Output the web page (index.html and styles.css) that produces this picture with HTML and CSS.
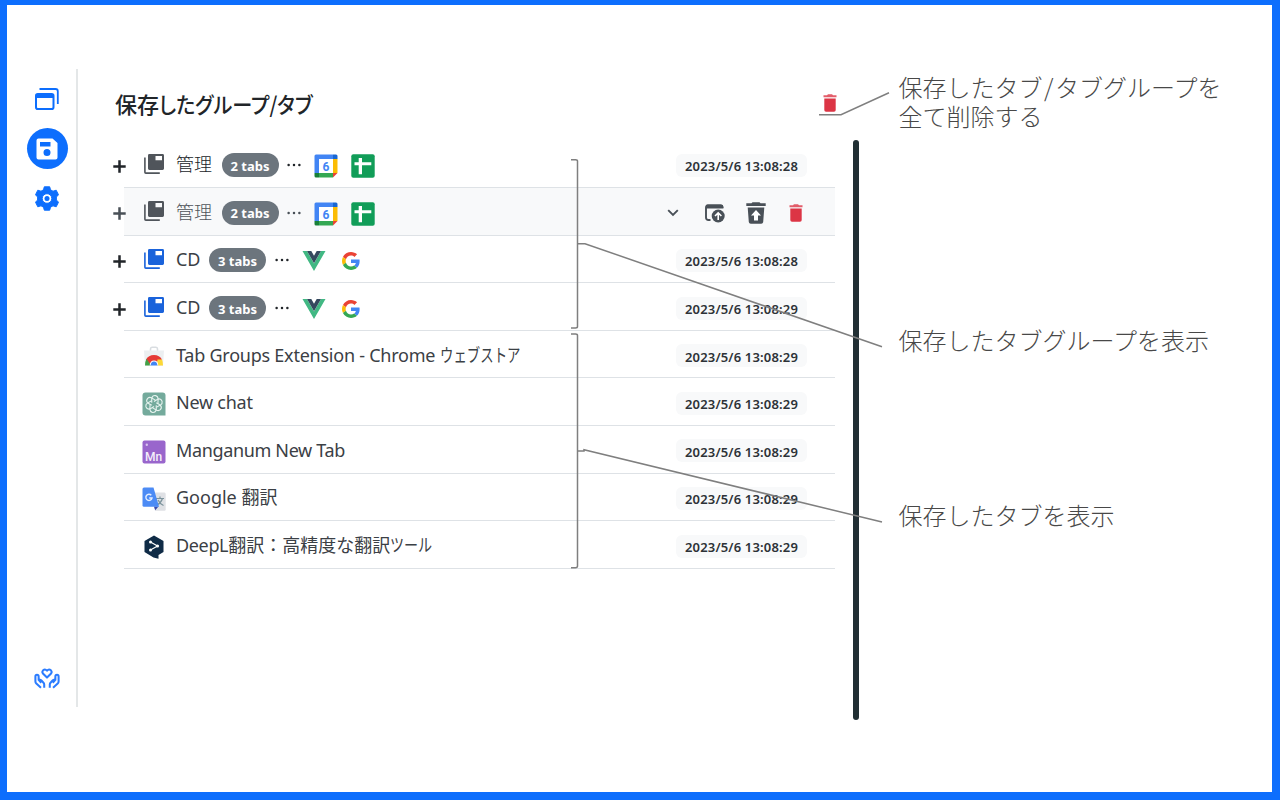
FILE: index.html
```html
<!DOCTYPE html>
<html lang="ja">
<head>
<meta charset="utf-8">
<title>保存したグループ/タブ</title>
<link rel="stylesheet" href="styles.css">
</head>
<body>
<svg class="defs" width="0" height="0">
  <symbol id="book" viewBox="0 0 20 20"><path fill="currentColor" d="M5.400 0H18.600Q20 0 20 1.400V14.600Q20 16 18.600 16H5.400Q4 16 4 14.600V1.400Q4 0 5.400 0ZM11.500 2V6.300H18V2Z" fill-rule="evenodd"/><path fill="none" stroke="currentColor" stroke-width="1.600" d="M.9 3.500V18.200Q.9 19.100 1.800 19.100H15.800"/></symbol>
  <symbol id="calendar" viewBox="0 0 24 24"><path fill="#4285f4" d="M2 .5H19V5H5V19H.5V2Q.5.5 2 .5Z"/><path fill="#1967d2" d="M19 .5H22Q23.500.5 23.500 2V5H19Z"/><path fill="#fbbc04" d="M19 5H23.500V19H19Z"/><path fill="#188038" d="M.5 19H5V23.500H2Q.5 23.500.5 22Z"/><path fill="#34a853" d="M5 19H19V23.500H5Z"/><path fill="#fff" d="M5 5H19V19H5Z"/><path fill="#ea4335" d="M19 19H23.500L19 23.500Z"/></symbol>
  <symbol id="sheets" viewBox="0 0 24 24"><rect x=".3" y=".3" width="23.400" height="23.400" rx="2" fill="#119d58"/><path fill="#fff" d="M7.700 4H11V8.200H20.300V11.300H11V20.300H7.700V11.300H3.500V8.200H7.700Z"/></symbol>
  <symbol id="vue" viewBox="0 0 24 24"><path fill="#41b883" d="M.5 2H5L12 14.500 19 2H23.500L12 22Z"/><path fill="#34495e" d="M5 2H9.300L12 6.700 14.700 2H19L12 14.200Z"/></symbol>
  <symbol id="google" viewBox="0 0 48 48"><path fill="#EA4335" d="M24 9.500c3.540 0 6.710 1.220 9.210 3.600l6.850-6.850C35.900 2.380 30.470 0 24 0 14.620 0 6.510 5.380 2.560 13.220l7.980 6.190C12.430 13.720 17.740 9.500 24 9.500z"/><path fill="#4285F4" d="M46.980 24.550c0-1.570-.15-3.090-.38-4.550H24v9.020h12.940c-.58 2.960-2.260 5.480-4.780 7.180l7.730 6c4.510-4.180 7.090-10.360 7.090-17.650z"/><path fill="#FBBC05" d="M10.530 28.590c-.48-1.450-.76-2.990-.76-4.590s.27-3.140.76-4.590l-7.980-6.190C.92 16.460 0 20.120 0 24c0 3.880.92 7.540 2.560 10.780l7.970-6.190z"/><path fill="#34A853" d="M24 48c6.480 0 11.930-2.130 15.890-5.810l-7.730-6c-2.150 1.450-4.920 2.300-8.160 2.300-6.260 0-11.570-4.220-13.470-9.910l-7.980 6.190C6.510 42.620 14.620 48 24 48z"/></symbol>
  <symbol id="trash" viewBox="0 0 14 18"><path fill="#dc3545" d="M.5 1.300H4L5 .3H9L10 1.300H13.500V3.300H.5Z" opacity=".8"/><path fill="#dc3545" d="M1.300 4.500H12.700V16Q12.700 17.700 11 17.700H3Q1.300 17.700 1.300 16Z"/></symbol>
  <symbol id="plus" viewBox="0 0 13 13"><path stroke="currentColor" stroke-width="2.500" d="M6.500 .3V12.700M.3 6.500H12.700"/></symbol>
  <symbol id="dots" viewBox="0 0 14 4"><g fill="currentColor"><circle cx="1.600" cy="2" r="1.250"/><circle cx="7" cy="2" r="1.250"/><circle cx="12.400" cy="2" r="1.250"/></g></symbol>
</svg>

<div class="frame">
  <nav class="sidebar">
    <svg class="nav-icon" width="24" height="23" viewBox="0 0 24 23"><path fill="none" stroke="#0d6efd" stroke-width="1.800" d="M4.500 1H20.500Q22.800 1 22.800 3.300V16"/><rect x="1" y="6" width="17.500" height="15" rx="1.800" fill="none" stroke="#0d6efd" stroke-width="2"/><path fill="#0d6efd" d="M1 6H18.500V10H1Z"/></svg>
    <div class="nav-active"><svg width="22" height="22" viewBox="0 0 22 22"><path fill="#fff" fill-rule="evenodd" d="M2.500.5H16.500L21.500 5V19.500Q21.500 21.500 19.500 21.500H2.500Q.5 21.500.5 19.500V2.500Q.5.5 2.500.5ZM4 4V8.500H14.500V4ZM11 11A3.500 3.500 0 1 0 11 18A3.500 3.500 0 1 0 11 11Z"/></svg></div>
    <svg class="nav-gear" width="24" height="25" viewBox="0 0 24 25"><path fill="#0d6efd" stroke="#0d6efd" stroke-linejoin="round" fill-rule="evenodd" d="M9.300.8H14.700L15.500 3.800 18 5.200 21.200 4.200 23.500 8.800 21.400 11V14L23.500 16.200 21.200 20.800 18 19.800 15.500 21.200 14.700 24.200H9.300L8.500 21.200 6 19.800 2.800 20.800.5 16.200 2.600 14V11L.5 8.800 2.800 4.200 6 5.200 8.500 3.800ZM12 7.700A4.800 4.800 0 1 0 12 17.300A4.800 4.800 0 1 0 12 7.700Z"/><circle cx="12" cy="12.500" r="2.500" fill="#0d6efd"/></svg>
    <svg class="nav-care" width="26" height="21" viewBox="0 0 28 22"><g fill="none" stroke="#2b7cff" stroke-width="2.200" stroke-linejoin="round"><path d="M14 10L9.600 5.600Q8.300 3.800 9.800 2.200 12 .3 14 2.600 16 .3 18.200 2.200 19.700 3.800 18.400 5.600Z"/><path d="M7.500 21L2.500 16.500Q1.500 15.500 1.500 14V9Q1.500 7 3.200 7 5 7 5 9V12.500L7.800 15.500M5 13Q6.500 11.800 8 13.200L10 15.300Q11 16.300 11 17.500V21"/><path d="M20.500 21L25.500 16.500Q26.500 15.500 26.500 14V9Q26.500 7 24.800 7 23 7 23 9V12.500L20.200 15.500M23 13Q21.500 11.800 20 13.200L18 15.300Q17 16.300 17 17.500V21"/></g></svg>
  </nav>

  <main class="panel">
    <header class="panel-head"><h1>保存<span class="narrow">したグループ/タブ</span></h1><svg class="trash" width="14" height="18"><use href="#trash"/></svg></header>
    <ul class="list">
      <li class="row"><svg class="plus"><use href="#plus"/></svg><svg class="book"><use href="#book"/></svg><span class="name kanji">管理</span><span class="badge">2 tabs</span><svg class="dots"><use href="#dots"/></svg><svg class="fav"><use href="#calendar"/><text x="12" y="16.500" text-anchor="middle" class="cal-day">6</text></svg><svg class="fav"><use href="#sheets"/></svg><time>2023/5/6 13:08:28</time></li>
      <li class="row hovered"><svg class="plus"><use href="#plus"/></svg><svg class="book"><use href="#book"/></svg><span class="name kanji">管理</span><span class="badge">2 tabs</span><svg class="dots"><use href="#dots"/></svg><svg class="fav"><use href="#calendar"/><text x="12" y="16.500" text-anchor="middle" class="cal-day">6</text></svg><svg class="fav"><use href="#sheets"/></svg>
        <span class="actions">
          <svg width="12" height="8" viewBox="0 0 12 8"><path fill="none" stroke="#495057" stroke-width="1.900" d="M1.200 1.200L6 6 10.800 1.200"/></svg>
          <svg class="restore" width="20" height="19" viewBox="0 0 20 19"><path fill="none" stroke="#495057" stroke-width="1.900" d="M5.500 16H3.500Q1 16 1 13.500V3.500Q1 1.500 3 1.500H15.500Q17.500 1.500 17.500 4"/><path fill="#495057" d="M2.500.6H16Q18.400.6 18.400 3V4.500H1V2Q1 .6 2.500.6Z"/><circle cx="13.200" cy="12" r="6.500" fill="#495057"/><path fill="none" stroke="#fff" stroke-width="1.600" d="M13.200 16V9M10 12L13.200 8.900 16.400 12"/></svg>
          <svg class="restore-del" width="20" height="22" viewBox="0 0 20 22"><path fill="#495057" d="M.3 1.200H5.500L6.500.2H13.500L14.500 1.200H19.700V4H.3ZM1.700 5.500H18.300L17.200 20Q17 21.800 15.200 21.800H4.800Q3 21.800 2.800 20Z"/><path fill="#fff" d="M10 8L15 13.500H12V18.500H8V13.500H5Z"/></svg>
          <svg width="14" height="18"><use href="#trash"/></svg>
        </span></li>
      <li class="row"><svg class="plus"><use href="#plus"/></svg><svg class="book blue"><use href="#book"/></svg><span class="name cd">CD</span><span class="badge">3 tabs</span><svg class="dots"><use href="#dots"/></svg><svg class="fav"><use href="#vue"/></svg><svg class="fav google"><use href="#google"/></svg><time>2023/5/6 13:08:28</time></li>
      <li class="row"><svg class="plus"><use href="#plus"/></svg><svg class="book blue"><use href="#book"/></svg><span class="name cd">CD</span><span class="badge">3 tabs</span><svg class="dots"><use href="#dots"/></svg><svg class="fav"><use href="#vue"/></svg><svg class="fav google"><use href="#google"/></svg><time>2023/5/6 13:08:29</time></li>
      <li class="row tab"><svg class="site" viewBox="0 0 24 24"><path fill="none" stroke="#d9dde1" stroke-width="1.600" d="M8.500 6V4Q8.500 2.300 10 2.300H14Q15.500 2.300 15.500 4V6"/><path fill="#eceff1" d="M2 5.500H22L21 21H3Z"/><path fill="#e53935" d="M4 14.500Q6.500 10 12 10T20 14.500L14 17H10L8 19.500Z"/><path fill="#43a047" d="M3 20.500Q3 16.500 4.500 13.800L9 20.500Z"/><path fill="#fdd835" d="M15 20.500L15.500 14.500H20Q21 17 21 20.500Z"/><path fill="#fff" d="M7.700 20.500Q8 15.500 12 15.500T16.300 20.500Z"/><path fill="#4285f4" d="M8.500 20.500Q9 16.500 12 16.500T15.500 20.500Z"/></svg><span class="name"><span class="t1">Tab Groups Extension - Chrome </span><span class="k1">ウェブストア</span></span><time>2023/5/6 13:08:29</time></li>
      <li class="row tab"><svg class="site" viewBox="0 0 24 24"><path fill="#74aa9c" d="M3.500.5H20.500Q23.500.5 23.500 3.500V23.500H3.500Q.5 23.500.5 20.500V3.500Q.5.5 3.500.5Z"/><g fill="none" stroke="#e5f2ee" stroke-width="1.100"><path id="petal" d="M12 9.400L16 7.100Q19 6.300 20.100 9.300 20.600 11.600 18.700 12.900L14.300 15.200"/><use href="#petal" transform="rotate(60 12 12)"/><use href="#petal" transform="rotate(120 12 12)"/><use href="#petal" transform="rotate(180 12 12)"/><use href="#petal" transform="rotate(240 12 12)"/><use href="#petal" transform="rotate(300 12 12)"/></g></svg><span class="name chat">New chat</span><time>2023/5/6 13:08:29</time></li>
      <li class="row tab"><svg class="site" viewBox="0 0 24 24"><rect x=".5" y=".5" width="23" height="23" rx="2" fill="#9966cc"/><circle cx="4.800" cy="4.800" r="1.200" fill="#d9c5ee"/><text x="11.700" y="20.500" text-anchor="middle" class="mn">Mn</text></svg><span class="name manga">Manganum New Tab</span><time>2023/5/6 13:08:29</time></li>
      <li class="row tab"><svg class="site" viewBox="0 0 24 24"><path fill="#dfe1e5" d="M9 5.500H22.500Q23.700 5.500 23.700 7V22.500Q23.700 23.700 22.500 23.700H13Z"/><path fill="none" stroke="#7a929b" stroke-width="1.200" d="M14 11.500H22M18 9.500V11.500M20.500 11.500Q19 16 15 18M16 13Q18 17 21.500 18.500"/><path fill="#3949ab" d="M12 19.500H16.500L13.200 23.300Z"/><path fill="#4c8bf5" d="M2 .5H11.500L17 19.700H2Q.5 19.700.5 18.200V2Q.5.5 2 .5Z"/><path fill="none" stroke="#e2edff" stroke-width="1.400" d="M9.300 8.300A3.100 3.100 0 1 0 10 11H7.200"/></svg><span class="name gt">Google 翻訳</span><time>2023/5/6 13:08:29</time></li>
      <li class="row tab"><svg class="site" viewBox="0 0 24 24"><path fill="#0f2b46" d="M12 .5L21.500 6V17L16.500 20V23.800L11.500 22.500 2.500 17V6Z"/><path fill="none" stroke="#fff" stroke-width="1.200" d="M8.500 7L15.500 11 8.500 15"/><g fill="#fff"><circle cx="8.500" cy="7" r="1.500"/><circle cx="15.500" cy="11" r="1.600"/><circle cx="8.500" cy="15" r="1.500"/></g></svg><span class="name"><span class="t2">DeepL</span>翻訳：高精度な翻訳<span class="k4">ツール</span></span><time>2023/5/6 13:08:29</time></li>
    </ul>
  </main>
  <div class="scrollbar"></div>

  <aside class="notes">
    <p class="note note-delete">保存したタブ<span class="slash">/</span>タブグループを<br>全て削除する</p>
    <p class="note note-groups">保存したタブグループを表示</p>
    <p class="note note-tabs">保存したタブを表示</p>
  </aside>
</div>
<svg class="callouts" width="1280" height="800" viewBox="0 0 1280 800"><g fill="none" stroke="#7f7f7f" stroke-width="1.500"><path d="M819 114.700H841L889 92.800"/><path d="M571 159.700H575.500Q577.500 159.700 577.500 161V326.500Q577.500 328 575.500 328H571M577.500 243.700H585L882 346.800"/><path d="M571 334H575.500Q577.500 334 577.500 335.500V566Q577.500 567.700 575.500 567.700H571M577.500 451H584V449.700L882 522"/></g></svg>
</body>
</html>
```
FILE: styles.css
```css
* { box-sizing: border-box; }
body { margin: 0; background: #fff; color: #212529; font-family: "Noto Sans", "Noto Sans CJK JP", sans-serif; }
svg { display: block; flex: none; }
.defs { position: absolute; }
.frame { display: flex; align-items: flex-start; width: 1280px; height: 800px; border: solid #0d6efd; border-width: 5px 8px 8px 7px; overflow: hidden; }

.sidebar { display: flex; flex-direction: column; align-items: center; flex: none; width: 71px; height: 638px; margin-top: 64px; padding: 19px 0 18px 11px; border-right: 2px solid #e4e7e8; }
.nav-active { display: flex; align-items: center; justify-content: center; flex: none; width: 41px; height: 41px; margin-top: 17px; border-radius: 50%; background: #0d6efd; }
.nav-gear { margin-top: 17px; }
.nav-care { margin-top: auto; }

.panel { flex: none; width: 757px; margin-top: 69px; padding-left: 37px; }
.panel-head { display: flex; align-items: center; height: 66.500px; padding-bottom: 8px; }
h1 { margin: 0; font-family: "Noto Sans CJK JP", sans-serif; font-size: 22px; font-weight: 500; line-height: 32px; white-space: nowrap; font-feature-settings: "palt"; }
.narrow { display: inline-block; transform: scaleX(.915); transform-origin: left; }
.trash { margin-left: auto; margin-right: -1.500px; }
.list { margin: 0 0 0 9px; padding: 0; list-style: none; }
.row { display: flex; align-items: center; height: 47.600px; padding: 3px 28px 0 0; border-bottom: 1.500px solid #dee2e6; white-space: nowrap; }
.hovered { background: #f8f9fa; color: #495057; }
.plus { width: 13px; height: 13px; margin: 2px 18px 0 -11px; }
.book { width: 20px; height: 20px; margin: -3px 12px 0 0; color: #50555b; }
.blue { color: #1a63db; }
.site { width: 24px; height: 24px; margin: 2px 10px 0 18px; }
.name { font-size: 18px; line-height: 28px; margin-top: -2px; color: #3b4045; }
.kanji { width: 36.500px; margin-top: -4px; font-family: "Noto Sans CJK JP", sans-serif; font-weight: 300; color: #212529; }
.hovered .name { color: #50555a; }
.cd { width: 24px; letter-spacing: -.2px; }
.badge { display: flex; align-items: center; justify-content: center; width: 57px; height: 24px; margin: 0 8.500px 0 9px; padding-top: 2px; border-radius: 12px; background: #6c757d; color: #fff; font-size: 13px; font-weight: 700; line-height: 1; }
.dots { width: 14px; height: 4px; }
.fav { width: 24px; height: 24px; margin: 2px 0 0 13px; }
.google { width: 18px; height: 18px; margin: 2px 0 0 16px; }
.cal-day { font: 700 12px Roboto, sans-serif; fill: #4285f4; }
.mn { font: 500 12px Roboto, sans-serif; fill: #f5effb; }
.t1 { letter-spacing: -.24px; }
.t2 { letter-spacing: -.35px; }
.chat { letter-spacing: -.25px; }
.manga { letter-spacing: -.35px; }
.k1, .k4 { display: inline-block; transform-origin: left; }
.k1 { transform: scaleX(.745); }
.k4 { transform: scaleX(.78); }
time { display: flex; align-items: center; justify-content: center; width: 131px; height: 23px; margin-left: auto; padding-top: 3px; border-radius: 6px; background: #f8f9fa; color: #2d3237; font-size: 13px; font-weight: 600; line-height: 1; letter-spacing: .17px; }
.actions { display: flex; align-items: center; gap: 22px; margin: 1px 4px 0 auto; }
.actions svg:first-child { margin-right: 4px; }
.restore-del { margin: 0 1.500px 0 -1.500px; }

.scrollbar { flex: none; width: 6px; height: 580px; margin: 135px 0 0 18px; border-radius: 3px; background: #212f34; }
.notes { flex: none; margin: 67px 0 0 39.500px; }
.note { margin: 0; color: #484848; font-family: "Noto Sans CJK JP", sans-serif; font-size: 24px; font-weight: 300; line-height: 29px; white-space: nowrap; }
.slash { padding: 0 1.500px; }
.note-groups { margin-top: 195px; }
.note-tabs { margin-top: 146px; }
.callouts { position: absolute; top: 0; left: 0; pointer-events: none; }
```
